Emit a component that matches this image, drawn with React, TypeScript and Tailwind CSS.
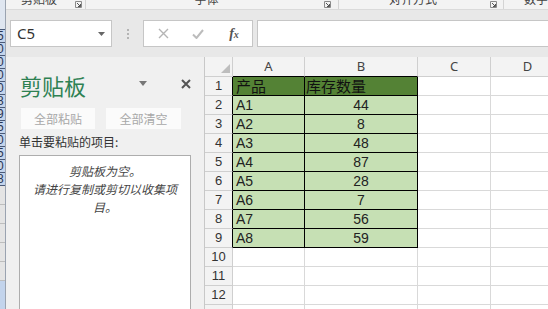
import React from "react";

const CJK = "font-['Noto_Sans_CJK_SC','Noto_Sans',sans-serif]";
const NUM = "font-['Liberation_Sans','Noto_Sans_CJK_SC',sans-serif]";

function Launcher() {
  return (
    <svg width="7" height="7" viewBox="0 0 7 7" className="shrink-0">
      <path d="M0.5 0.5H6.5V6.5H0.5Z" fill="none" stroke="#8a8a8a" strokeWidth="1" />
      <path d="M2 2L5.5 5.5M5.5 3V5.5H3" fill="none" stroke="#555" strokeWidth="1" />
    </svg>
  );
}

const rows: { a: string; b: string }[] = [
  { a: "A1", b: "44" },
  { a: "A2", b: "8" },
  { a: "A3", b: "48" },
  { a: "A4", b: "87" },
  { a: "A5", b: "28" },
  { a: "A6", b: "7" },
  { a: "A7", b: "56" },
  { a: "A8", b: "59" },
];

const stripDigits = ["5", "0", "0", "0", "0", "8", "9", "5", "0", "5", "0", "8"];

export default function App() {
  return (
    <div className={`w-[548px] h-[309px] overflow-hidden flex bg-[#ebebeb] ${CJK}`}>
      {/* left sliver of window behind */}
      <div className="w-[6px] h-full flex flex-col shrink-0 bg-[#c9d7ea] border-r border-[#9aa3b0]">
        <div className="h-[30px] bg-[#dfe6f0] border-b border-[#4a5a78]" />
        {stripDigits.map((d, i) => (
          <div
            key={i}
            className={`h-[13px] overflow-hidden border-b border-[#4a5a78] bg-[#c3d4ec] ${NUM} text-[12px] leading-[13px] text-[#2a3550]`}
          >
            <span className="block -ml-[3px]">{d}</span>
          </div>
        ))}
        <div className="flex-1 flex flex-col bg-[#e4e4e4]">
          <div className="h-[19px] border-b border-[#bdbdbd]" />
          <div className="h-[19px] border-b border-[#bdbdbd]" />
          <div className="h-[19px] border-b border-[#bdbdbd]" />
          <div className="h-[19px] border-b border-[#bdbdbd]" />
          <div className="h-[19px] border-b border-[#bdbdbd]" />
          <div className="flex-1 bg-[#c3d4ec]" />
        </div>
      </div>

      <div className="flex-1 flex flex-col min-w-0">
        {/* ribbon group labels (cut off) */}
        <div className="h-[10px] flex items-stretch bg-[#f3f3f3] border-b border-[#dadada] overflow-hidden text-[12px] text-[#444] shrink-0">
          <div className="w-[81px] flex items-center pl-[15px] pr-[3px] border-r border-[#d4d4d4]">
            <span className="leading-[12px] -mt-[12px] whitespace-nowrap">剪贴板</span>
            <div className="flex-1" />
            <Launcher />
          </div>
          <div className="w-[254px] flex items-center pl-[108px] pr-[7px] border-r border-[#d4d4d4]">
            <span className="leading-[12px] -mt-[12px] whitespace-nowrap">字体</span>
            <div className="flex-1" />
            <Launcher />
          </div>
          <div className="w-[166px] flex items-center pl-[50px] pr-[6px] border-r border-[#d4d4d4]">
            <span className="leading-[12px] -mt-[12px] whitespace-nowrap">对齐方式</span>
            <div className="flex-1" />
            <Launcher />
          </div>
          <div className="flex-1 flex items-center pl-[20px]">
            <span className="leading-[12px] -mt-[12px] whitespace-nowrap">数字</span>
          </div>
        </div>

        {/* formula bar */}
        <div className="h-[47px] flex items-start pt-[10px] bg-[#e8e8e8] shrink-0">
          <div className="ml-[4px] w-[102px] h-[27px] bg-white border border-[#c6c6c6] flex items-center pl-[6px] pr-[6px] shrink-0">
            <span className="text-[15px] text-[#333] font-['Noto_Sans',sans-serif] leading-none">C5</span>
            <div className="flex-1" />
            <svg width="7" height="4" viewBox="0 0 7 4">
              <path d="M0 0H7L3.5 4Z" fill="#666" />
            </svg>
          </div>
          <div className="w-[31px] h-[27px] flex flex-col items-center justify-center gap-[2px] shrink-0">
            <div className="w-[2px] h-[2px] bg-[#b4b4b4]" />
            <div className="w-[2px] h-[2px] bg-[#b4b4b4]" />
            <div className="w-[2px] h-[2px] bg-[#b4b4b4]" />
          </div>
          <div className="w-[110px] h-[27px] bg-white border border-[#c6c6c6] flex items-center shrink-0">
            <div className="w-[36px] flex justify-center pl-[2px]">
              <svg width="11" height="11" viewBox="0 0 11 11">
                <path d="M1 1L10 10M10 1L1 10" stroke="#b5b5b5" strokeWidth="1.4" />
              </svg>
            </div>
            <div className="w-[36px] flex justify-center">
              <svg width="12" height="10" viewBox="0 0 12 10">
                <path d="M1 5.5L4.5 9L11 1" fill="none" stroke="#bcbcbc" strokeWidth="2" />
              </svg>
            </div>
            <div className="w-[36px] flex justify-center items-center">
              <span className="font-['Liberation_Serif',serif] italic font-bold text-[14px] text-[#555] leading-none">
                f<span className="text-[10px]">x</span>
              </span>
            </div>
          </div>
          <div className="ml-[4px] flex-1 h-[27px] bg-white border border-[#c6c6c6] -mr-[2px]" />
        </div>

        {/* main */}
        <div className="flex-1 flex min-h-0">
          {/* clipboard pane */}
          <div className="w-[199px] shrink-0 bg-[#f0f0f0] border-r border-[#c8c8c8] flex flex-col pl-[13px] pr-[8px]">
            <div className="h-[26px] mt-[15px] flex items-center">
              <span className="text-[22px] leading-[26px] text-[#2e8153] pl-[1px]">剪贴板</span>
              <div className="flex-1" />
              <svg width="8" height="5" viewBox="0 0 8 5" className="mr-[34px] -mt-[4px]">
                <path d="M0 0H8L4 5Z" fill="#777" />
              </svg>
              <svg width="10" height="10" viewBox="0 0 10 10" className="mr-[5px] -mt-[2px]">
                <path d="M1 1L9 9M9 1L1 9" stroke="#555" strokeWidth="2" />
              </svg>
            </div>
            <div className="flex gap-[11px] mt-[10px] pl-[2px]">
              <div className="w-[74px] h-[21px] bg-[#fbfbfb] flex items-center justify-center text-[12px] text-[#a8a8a8]">
                全部粘贴
              </div>
              <div className="w-[75px] h-[21px] bg-[#fbfbfb] flex items-center justify-center text-[12px] text-[#a8a8a8]">
                全部清空
              </div>
            </div>
            <div className="mt-[6px] text-[12px] leading-[14px] text-[#333]">单击要粘贴的项目:</div>
            <div className="mt-[6px] w-[172px] flex-1 bg-white border border-[#adadad] border-b-0 pt-[6px] px-[7px] text-center text-[12px] leading-[18px] italic text-[#444]">
              <div>剪贴板为空。</div>
              <div>请进行复制或剪切以收集项目。</div>
            </div>
          </div>

          {/* grid */}
          <div className="flex-1 flex flex-col bg-white min-w-0 overflow-hidden">
            {/* column header */}
            <div className="h-[20px] flex bg-[#f3f3f3] text-[13px] text-[#444] font-['Noto_Sans',sans-serif] shrink-0">
              <div className="w-[28px] border-r border-b border-[#cfcfcf] flex items-end justify-end pr-[2px] pb-[3px] shrink-0">
                <svg width="9" height="9" viewBox="0 0 9 9">
                  <path d="M9 0V9H0Z" fill="#bdbdbd" />
                </svg>
              </div>
              <div className="w-[72px] border-r border-[#cfcfcf] border-b border-b-black flex items-center justify-center shrink-0">A</div>
              <div className="w-[113px] border-r border-[#cfcfcf] border-b border-b-black flex items-center justify-center shrink-0">B</div>
              <div className="w-[73px] border-r border-b border-[#cfcfcf] flex items-center justify-center shrink-0">C</div>
              <div className="w-[73px] border-b border-[#cfcfcf] flex items-center justify-center shrink-0">D</div>
            </div>

            {/* row 1 */}
            <div className="h-[19px] flex shrink-0">
              <div className={`w-[28px] bg-[#f3f3f3] border-b border-[#cfcfcf] border-r border-r-black flex items-center justify-center text-[13px] text-[#333] ${NUM} shrink-0`}>1</div>
              <div className="w-[72px] bg-[#548235] border-r border-b border-black flex items-center pl-[3px] text-[15px] text-[#111] shrink-0">产品</div>
              <div className="w-[113px] bg-[#548235] border-r border-b border-black flex items-center pl-[1px] text-[15px] text-[#111] shrink-0">库存数量</div>
              <div className="w-[73px] border-r border-b border-[#d9d9d9] shrink-0" />
              <div className="w-[73px] border-b border-[#d9d9d9] shrink-0" />
            </div>

            {rows.map((r, i) => (
              <div key={r.a} className="h-[19px] flex shrink-0">
                <div className={`w-[28px] bg-[#f3f3f3] border-b border-[#cfcfcf] border-r border-r-black flex items-center justify-center text-[13px] text-[#333] ${NUM} shrink-0`}>
                  {i + 2}
                </div>
                <div className={`w-[72px] bg-[#c6e0b4] border-r border-b border-black flex items-center pl-[3px] text-[14px] text-[#222] ${NUM} shrink-0`}>
                  {r.a}
                </div>
                <div className={`w-[113px] bg-[#c6e0b4] border-r border-b border-black flex items-center justify-center text-[14px] text-[#222] ${NUM} shrink-0`}>
                  {r.b}
                </div>
                <div className="w-[73px] border-r border-b border-[#d9d9d9] shrink-0" />
                <div className="w-[73px] border-b border-[#d9d9d9] shrink-0" />
              </div>
            ))}

            {[10, 11, 12, 13].map((n) => (
              <div key={n} className="h-[19px] flex shrink-0">
                <div className={`w-[28px] bg-[#f3f3f3] border-b border-r border-[#cfcfcf] flex items-center justify-center text-[13px] text-[#333] ${NUM} shrink-0`}>
                  {n}
                </div>
                <div className="w-[72px] border-r border-b border-[#d9d9d9] shrink-0" />
                <div className="w-[113px] border-r border-b border-[#d9d9d9] shrink-0" />
                <div className="w-[73px] border-r border-b border-[#d9d9d9] shrink-0" />
                <div className="w-[73px] border-b border-[#d9d9d9] shrink-0" />
              </div>
            ))}
          </div>
        </div>
      </div>
    </div>
  );
}
